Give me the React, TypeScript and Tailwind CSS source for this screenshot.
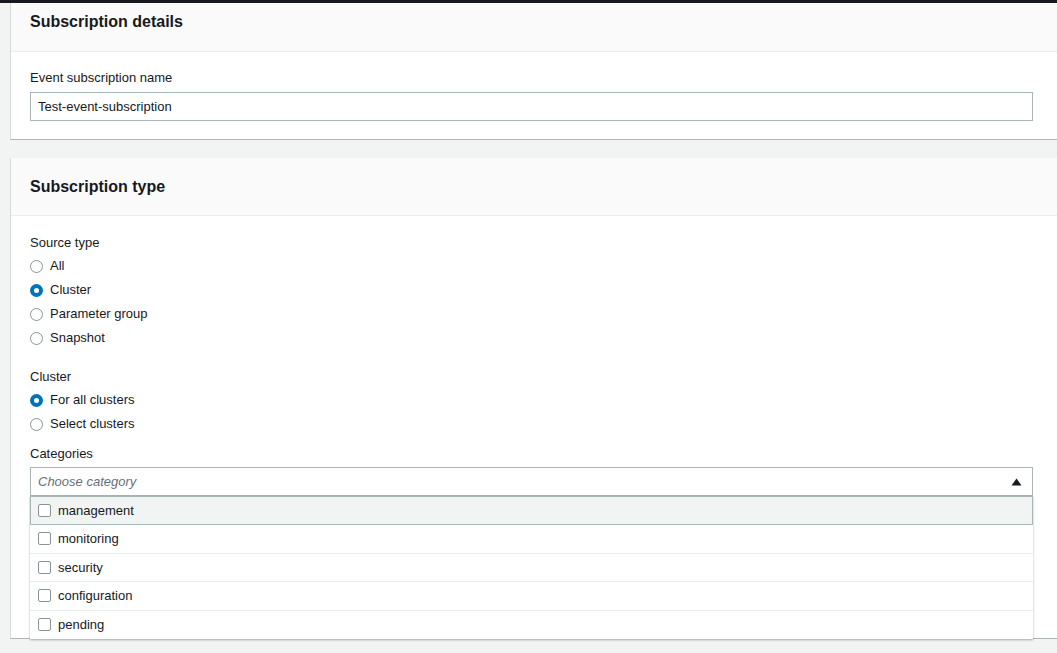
import React from "react";

const font = { fontFamily: '"Liberation Sans", Arial, sans-serif' };

function Radio({ label, checked }: { label: string; checked?: boolean }) {
  return (
    <label className="flex h-6 items-center gap-[7px] text-[13px] text-[#16191f]">
      {checked ? (
        <span className="box-border h-[13px] w-[13px] rounded-full border-[4px] border-[#0073bb] bg-white" />
      ) : (
        <span className="box-border h-[13px] w-[13px] rounded-full border border-[#879596] bg-white" />
      )}
      <span>{label}</span>
    </label>
  );
}

function Checkbox() {
  return <span className="box-border h-[13px] w-[13px] shrink-0 rounded-[2px] border border-[#879596] bg-white" />;
}

const categories = ["management", "monitoring", "security", "configuration", "pending"];

function CategorySelect() {
  return (
    <div className="relative">
      <div className="flex h-[29px] items-center justify-between border border-[#aab7b8] bg-white pl-[7px] pr-[10px]">
        <span className="text-[13px] italic text-[#687078]">Choose category</span>
        <svg width="11" height="8" viewBox="0 0 11 8">
          <path d="M5.5 0.5 L10.5 7.5 L0.5 7.5 Z" fill="#16191f" />
        </svg>
      </div>
      <ul className="absolute left-0 right-0 top-full z-10 bg-white shadow-[0_1px_2px_rgba(0,28,36,0.35)]">
        {categories.map((c, i) => (
          <li
            key={c}
            className={
              i === 0
                ? "flex h-[29px] items-center gap-[7px] border border-[#aab7b8] bg-[#f2f3f3] pl-[7px] text-[13px] text-[#16191f]"
                : "flex h-[28.5px] items-center gap-[7px] border-b border-[#eaeded] pl-[8px] text-[13px] text-[#16191f] last:border-b-0"
            }
          >
            <Checkbox />
            <span>{c}</span>
          </li>
        ))}
      </ul>
    </div>
  );
}

export default function App() {
  return (
    <div className="h-[653px] w-[1057px] overflow-hidden bg-[#f2f3f3]" style={font}>
      <div className="h-[3px] bg-[#16191f]" />
      <div className="pl-[10px]">
        {/* Subscription details */}
        <section className="border-b border-l border-b-[#aab7b8] border-l-[#d5dbdb] bg-white">
          <div className="flex h-[49px] items-center border-b border-[#eaeded] bg-[#fafafa] pl-[19px]">
            <h2 className="-mt-[10px] text-[16px] font-bold text-[#16191f]">Subscription details</h2>
          </div>
          <div className="pb-[18px] pl-[19px] pr-[24px] pt-[17px]">
            <div className="mb-[5px] text-[13px] leading-[18px] text-[#16191f]">Event subscription name</div>
            <div className="flex h-[29px] items-center border border-[#aab7b8] bg-white pl-[7px] text-[13px] text-[#16191f]">
              Test-event-subscription
            </div>
          </div>
        </section>

        {/* Subscription type */}
        <section className="mt-[18px] border-b border-l border-b-[#aab7b8] border-l-[#d5dbdb] bg-white">
          <div className="flex h-[58px] items-center border-b border-[#eaeded] bg-[#fafafa] pl-[19px]">
            <h2 className="text-[16px] font-bold text-[#16191f]">Subscription type</h2>
          </div>
          <div className="pl-[19px] pr-[24px] pt-[18px]">
            <div className="text-[13px] leading-[18px] text-[#16191f]">Source type</div>
            <div className="mt-[2px] flex flex-col">
              <Radio label="All" />
              <Radio label="Cluster" checked />
              <Radio label="Parameter group" />
              <Radio label="Snapshot" />
            </div>
            <div className="mt-[18px] text-[13px] leading-[18px] text-[#16191f]">Cluster</div>
            <div className="mt-[2px] flex flex-col">
              <Radio label="For all clusters" checked />
              <Radio label="Select clusters" />
            </div>
            <div className="mt-[9px] text-[13px] leading-[18px] text-[#16191f]">Categories</div>
            <div className="mt-[4px]">
              <CategorySelect />
            </div>
            <div className="h-[142px]" />
          </div>
        </section>
      </div>
    </div>
  );
}
